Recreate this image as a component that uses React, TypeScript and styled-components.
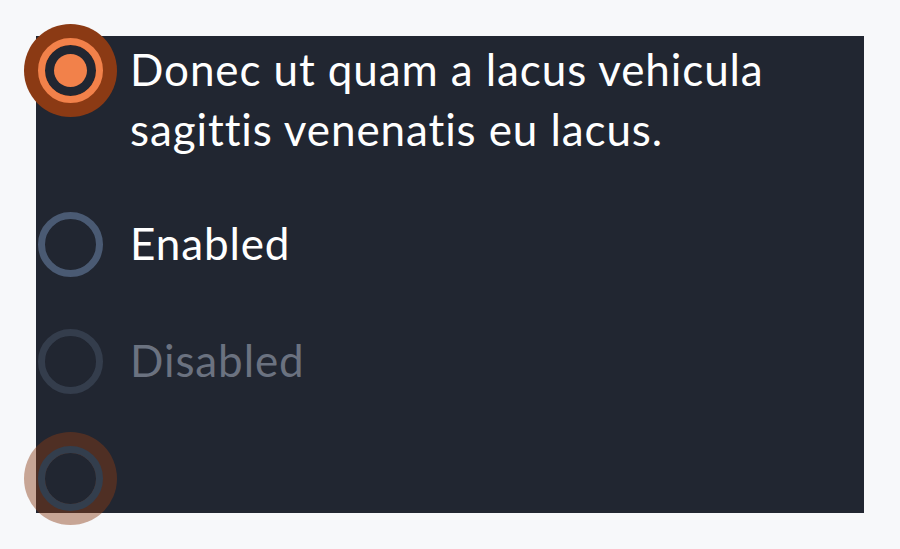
import React from "react";
import styled, { createGlobalStyle, css } from "styled-components";

const Global = createGlobalStyle`
  html, body { margin: 0; padding: 0; background: #f7f8fa; }
  body { font-family: Lato, "Noto Sans", sans-serif; }
`;

const Page = styled.div`
  padding: 36px;
  width: 900px;
  height: 549px;
  box-sizing: border-box;
`;

const Panel = styled.div`
  background: #212631;
  height: 477px;
  display: flex;
  flex-direction: column;
  gap: 48px;
`;

const Row = styled.label`
  display: flex;
  align-items: flex-start;
  gap: 25px;
`;

type Kind = "checked" | "idle" | "disabled" | "focus";

const Radio = styled.span<{ $kind: Kind }>`
  position: relative;
  flex: none;
  width: 65px;
  height: 65px;
  margin: 2px;
  box-sizing: border-box;
  border-radius: 50%;
  border: 7px solid #4a5a73;
  background: #212631;
  background-clip: padding-box;

  &::before {
    content: "";
    position: absolute;
    inset: -21px;
    border-radius: 50%;
    z-index: -1;
  }

  ${(p) =>
    p.$kind === "checked" &&
    css`
      border-color: #f2814a;
      &::before { background: #8b3a14; }
      &::after {
        content: "";
        position: absolute;
        inset: 9px;
        border-radius: 50%;
        background: #f2814a;
      }
    `}
  ${(p) =>
    p.$kind === "disabled" &&
    css`
      border-color: #343d4c;
    `}
  ${(p) =>
    p.$kind === "focus" &&
    css`
      border-color: #333e4d;
      &::before { background: rgba(140, 60, 20, 0.44); }
    `}
`;

const RadioHolder = styled.span`
  position: relative;
  z-index: 0;
  display: flex;
`;

const Label = styled.span<{ $disabled?: boolean }>`
  padding: 3px 0;
  font-size: 44px;
  line-height: 60px;
  letter-spacing: 0.9px;
  font-variant-ligatures: none;
  color: ${(p) => (p.$disabled ? "#6b7280" : "#ffffff")};
  max-width: 680px;
`;

export default function App() {
  return (
    <>
      <Global />
      <Page>
        <Panel>
          <Row>
            <RadioHolder><Radio $kind="checked" /></RadioHolder>
            <Label>Donec ut quam a lacus vehicula sagittis venenatis eu lacus.</Label>
          </Row>
          <Row>
            <RadioHolder><Radio $kind="idle" /></RadioHolder>
            <Label>Enabled</Label>
          </Row>
          <Row>
            <RadioHolder><Radio $kind="disabled" /></RadioHolder>
            <Label $disabled>Disabled</Label>
          </Row>
          <Row>
            <RadioHolder><Radio $kind="focus" /></RadioHolder>
          </Row>
        </Panel>
      </Page>
    </>
  );
}
